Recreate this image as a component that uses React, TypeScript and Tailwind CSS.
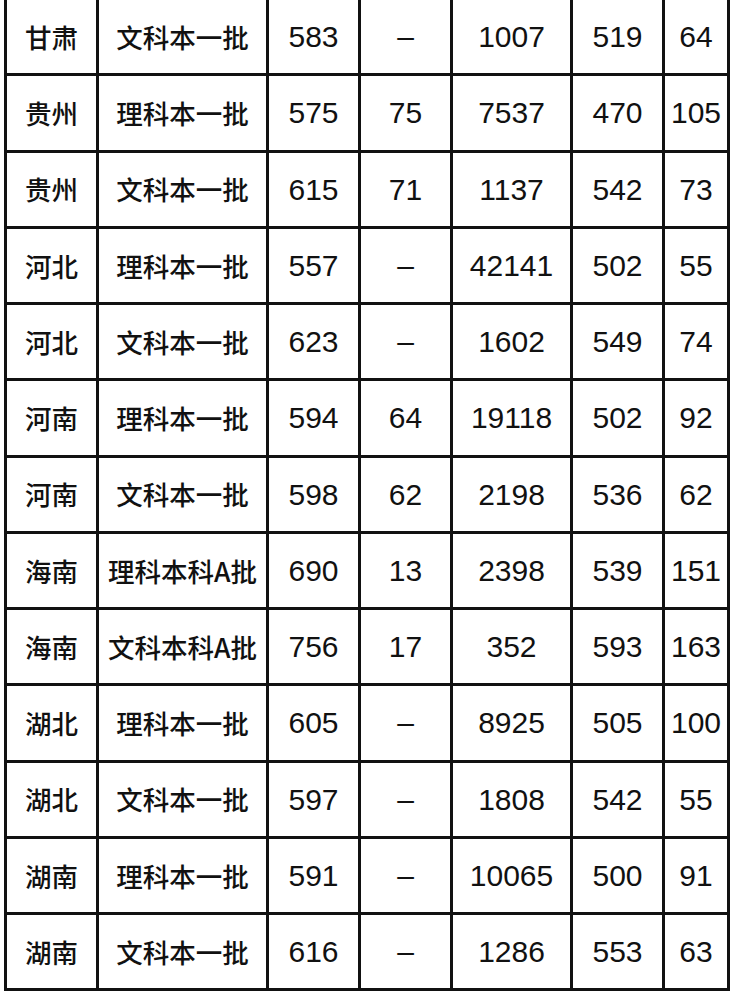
import React from "react";

const rows: string[][] = [
  ["甘肃", "文科本一批", "583", "–", "1007", "519", "64"],
  ["贵州", "理科本一批", "575", "75", "7537", "470", "105"],
  ["贵州", "文科本一批", "615", "71", "1137", "542", "73"],
  ["河北", "理科本一批", "557", "–", "42141", "502", "55"],
  ["河北", "文科本一批", "623", "–", "1602", "549", "74"],
  ["河南", "理科本一批", "594", "64", "19118", "502", "92"],
  ["河南", "文科本一批", "598", "62", "2198", "536", "62"],
  ["海南", "理科本科A批", "690", "13", "2398", "539", "151"],
  ["海南", "文科本科A批", "756", "17", "352", "593", "163"],
  ["湖北", "理科本一批", "605", "–", "8925", "505", "100"],
  ["湖北", "文科本一批", "597", "–", "1808", "542", "55"],
  ["湖南", "理科本一批", "591", "–", "10065", "500", "91"],
  ["湖南", "文科本一批", "616", "–", "1286", "553", "63"],
];

const widths = ["w-[92px]", "w-[170px]", "w-[92px]", "w-[92px]", "w-[120px]", "w-[92px]", "w-[65px]"];

export default function App() {
  return (
    <div className="w-[733px] h-[996px] bg-white overflow-hidden">
      <div className="ml-[4px] w-[726px] border-l-[3px] border-[#111]">
        {rows.map((r, i) => (
          <div key={i} className="flex h-[76.25px] border-b-[3px] border-[#111]">
            {r.map((c, j) => (
              <div
                key={j}
                className={`${widths[j]} shrink-0 border-r-[3px] border-[#111] flex items-center justify-center text-[#111] ${
                  j < 2
                    ? "text-[26.5px] font-medium [font-family:'Noto_Sans_CJK_SC',sans-serif]"
                    : "text-[30px] [font-family:'Liberation_Sans',Arial,sans-serif]"
                }`}
              >
                {c}
              </div>
            ))}
          </div>
        ))}
      </div>
    </div>
  );
}
